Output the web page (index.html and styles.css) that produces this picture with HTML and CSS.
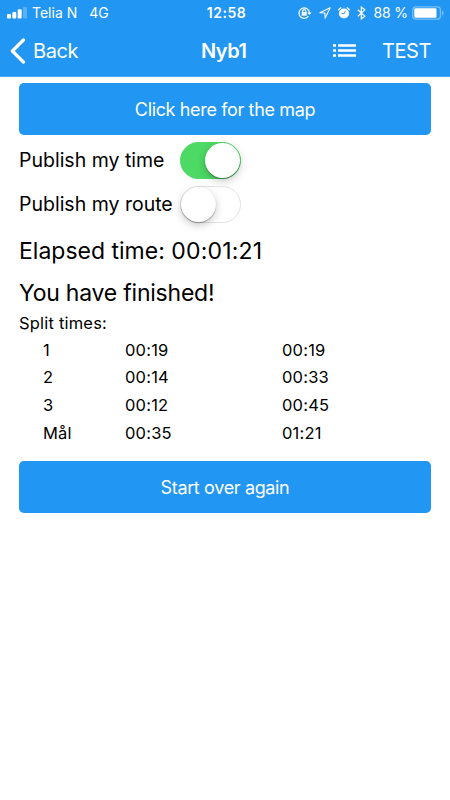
FILE: index.html
```html
<!DOCTYPE html>
<html lang="en">
<head>
<meta charset="utf-8">
<meta name="viewport" content="width=device-width, initial-scale=1">
<title>Nyb1</title>
<link rel="stylesheet" href="styles.css">
</head>
<body>
<header class="header">
  <div class="status">
    <div class="status-left">
      <svg class="signal" width="20" height="12" viewBox="0 0 20 12" fill="#fff"><rect x="0" y="7" width="4" height="4.5" rx="1"/><rect x="5.3" y="5" width="4" height="6.5" rx="1"/><rect x="10.7" y="2.3" width="4" height="9.2" rx="1"/><rect x="16" y="0" width="4" height="11.5" rx="1" opacity=".25"/></svg>
      <span class="carrier">Telia N</span>
      <span class="network">4G</span>
    </div>
    <span class="clock">12:58</span>
    <div class="status-right">
      <svg width="14" height="12" viewBox="0 0 14 12" fill="none" stroke="#fff" stroke-width="1.2"><path d="M10.4 9.2A5.2 5.2 0 1 1 11.4 5.6"/><path d="M9.2 5.4h4.4l-2.2 2.7z" fill="#fff" stroke="none"/><path d="M4.6 5.5V4.2a1.6 1.6 0 0 1 3.2 0v1.3"/><rect x="3.7" y="5.1" width="5" height="3.6" fill="#fff" stroke="none"/></svg>
      <svg class="location" width="12" height="12" viewBox="0 0 12 12" fill="none" stroke="#fff" stroke-width="1.1" stroke-linejoin="round"><path d="M11.2.8.9 5.7l5 .3.3 5.1z"/></svg>
      <svg class="alarm" width="12" height="12" viewBox="0 0 12 12"><circle cx="6" cy="6.5" r="5.1" fill="#fff"/><path d="M.7 2.9A6 6 0 0 1 2.9.8M9.1.8a6 6 0 0 1 2.2 2.1" fill="none" stroke="#fff" stroke-width="1.3" stroke-linecap="round"/><path d="M3.4 6.2 6 6.9 7.3 3.8" fill="none" stroke="#2196f3" stroke-width=".9"/></svg>
      <svg class="bluetooth" width="9" height="14" viewBox="0 0 9 14" fill="none" stroke="#fff" stroke-width="1.2"><path d="m.8 3.8 7 6.3-3.5 2.8V1.1l3.5 2.8-7 6.3"/></svg>
      <span class="percent">88 %</span>
      <svg class="battery" width="32" height="14" viewBox="0 0 32 14"><rect x=".8" y=".8" width="27.6" height="12.4" rx="3" fill="none" stroke="#fff" stroke-opacity=".4" stroke-width="1.3"/><rect x="2.3" y="2.3" width="22.2" height="9.4" rx="1.2" fill="#fff"/><path d="M30 4.6q1.7.6 1.7 2.4T30 9.4z" fill="#fff" opacity=".4"/></svg>
    </div>
  </div>
  <nav class="nav">
    <a class="back"><svg width="16" height="26" viewBox="0 0 16 26" fill="none" stroke="#fff" stroke-width="3.2" stroke-linecap="round" stroke-linejoin="round"><path d="M13.4 2 2.4 13l11 11"/></svg><span>Back</span></a>
    <h1 class="title">Nyb1</h1>
    <div class="actions">
      <svg width="23" height="14" viewBox="0 0 23 14" fill="#fff"><path d="M0 .2h3v2.6H0zM5 .2h18v2.6H5zM0 5.2h3v2.6H0zM5 5.2h18v2.6H5zM0 10.2h3v2.6H0zM5 10.2h18v2.6H5z"/></svg>
      <span class="test">TEST</span>
    </div>
  </nav>
</header>
<main class="content">
  <button class="button map">Click here for the map</button>
  <div class="option"><span class="option-label">Publish my time</span><span class="switch on"></span></div>
  <div class="option"><span class="option-label">Publish my route</span><span class="switch"></span></div>
  <p class="large elapsed">Elapsed time: <span class="elapsed-value">00:01:21</span></p>
  <p class="large finished">You have finished!</p>
  <p class="caption">Split times:</p>
  <div class="splits">
    <span>1</span><span>00:19</span><span>00:19</span>
    <span>2</span><span>00:14</span><span>00:33</span>
    <span>3</span><span>00:12</span><span>00:45</span>
    <span>Mål</span><span>00:35</span><span>01:21</span>
  </div>
  <button class="button restart">Start over again</button>
</main>
</body>
</html>
```
FILE: styles.css
```css
* { box-sizing: border-box; }
body { margin: 0; background: #fff; color: #000; font-family: Inter, "Liberation Sans", sans-serif; }
svg { display: block; flex: none; }
.header { height: 77px; background: #2196f3; color: #fff; border-bottom: 1px solid #4aa6f1; }
.status { display: grid; grid-template-columns: 1fr auto 1fr; align-items: center; height: 25px; padding: 0 7px; font-size: 14px; white-space: nowrap; }
.status-left, .status-right { display: flex; align-items: center; }
.status-right { justify-content: flex-end; margin-right: -1px; }
.carrier { margin-left: 5px; }
.network { margin-left: 12px; }
.clock { padding-left: 3px; font-weight: 600; letter-spacing: .5px; }
.location, .alarm, .bluetooth { margin-left: 7px; }
.percent { margin-left: 7px; letter-spacing: -.1px; }
.battery { margin-left: 4px; }
.nav { display: grid; grid-template-columns: 191px auto 1fr; align-items: center; height: 51px; padding: 0 19px 0 10px; font-size: 20px; }
.back { display: flex; align-items: center; gap: 7px; letter-spacing: -.4px; }
.title { margin: 0; font-size: 20px; font-weight: 600; letter-spacing: -.5px; }
.actions { display: flex; align-items: center; justify-content: flex-end; gap: 26px; }
.test { letter-spacing: -.4px; }
.content { display: flex; flex-direction: column; padding: 6px 19px 0; }
.button { height: 52px; border: 0; border-radius: 5px; background: #2196f3; color: #fff; font: 18px Inter, "Liberation Sans", sans-serif; letter-spacing: -.35px; }
.option { display: flex; align-items: center; height: 44px; font-size: 19.5px; }
.map + .option { margin-top: 3px; }
.option-label { width: 161px; white-space: nowrap; }
.switch { display: flex; width: 61px; height: 37px; border: 1.5px solid #e3e3e3; border-radius: 19px; }
.switch::after { content: ""; width: 35px; height: 35px; border-radius: 50%; background: #fff; box-shadow: 0 3px 8px rgba(0,0,0,.22), 0 1px 1px rgba(0,0,0,.3); }
.switch.on { justify-content: flex-end; background: #4cd964; border-color: #4cd964; }
p { margin: 0; white-space: nowrap; }
.large { height: 42px; line-height: 42px; font-size: 23px; }
.elapsed { margin-top: 4px; }
.elapsed-value { letter-spacing: .2px; }
.finished { letter-spacing: -.22px; }
.caption { height: 22px; line-height: 18px; font-size: 16.5px; letter-spacing: .2px; }
.splits { display: grid; grid-template-columns: 82px 157px 1fr; grid-auto-rows: 27.6px; align-items: center; padding-left: 24px; font-size: 16.5px; letter-spacing: .2px; }
.restart { margin-top: 15px; }
```
